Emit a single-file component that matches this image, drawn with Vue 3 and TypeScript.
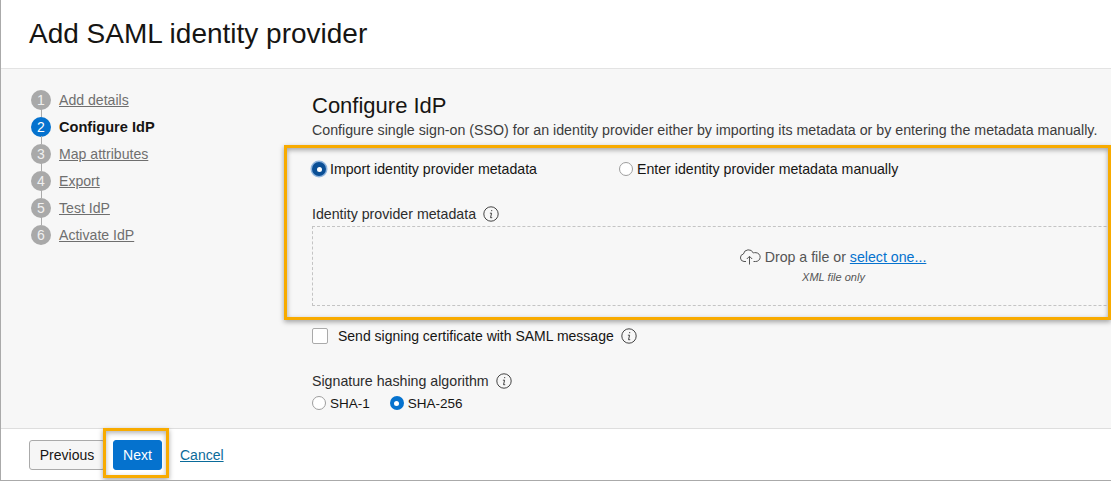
<script setup lang="ts">
const steps = [
  { n: 1, label: 'Add details' },
  { n: 2, label: 'Configure IdP', active: true },
  { n: 3, label: 'Map attributes' },
  { n: 4, label: 'Export' },
  { n: 5, label: 'Test IdP' },
  { n: 6, label: 'Activate IdP' },
]
</script>

<template>
  <div class="page">
    <header class="head"><h1>Add SAML identity provider</h1></header>
    <div class="body">
      <nav class="steps">
        <div v-for="s in steps" :key="s.n" class="step" :class="{ active: s.active }">
          <span class="num">{{ s.n }}</span>
          <span class="lbl">{{ s.label }}</span>
        </div>
      </nav>
      <main class="main">
        <h2>Configure IdP</h2>
        <p class="desc">Configure single sign-on (SSO) for an identity provider either by importing its metadata or by entering the metadata manually.</p>
        <section class="idp">
          <div class="radios">
            <label class="opt first"><span class="radio focus"></span>Import identity provider metadata</label>
            <label class="opt"><span class="radio off"></span>Enter identity provider metadata manually</label>
          </div>
          <div class="field-label">Identity provider metadata
            <svg class="info" viewBox="0 0 16 16"><circle cx="8" cy="8" r="7.2" /><path d="M8.7 4v1.200M6.900 7.200h1.700L7.500 11.700h1.700" /></svg>
          </div>
          <div class="drop">
            <div class="drop-line">
              <svg class="cloud" viewBox="0 0 22 18"><path d="M7 13.5H5a3.8 3.8 0 0 1-.6-7.5A5.2 5.2 0 0 1 14.3 5a4.3 4.3 0 0 1 2.7-.3 4.4 4.4 0 0 1-.5 8.800h-2" /><path d="M10.500 16.500V8.500M7.800 11l2.700-2.700 2.700 2.700" /></svg>
              <span>Drop a file or <a>select one...</a></span>
            </div>
            <div class="hint">XML file only</div>
          </div>
        </section>
        <div class="check-row"><span class="check"></span>Send signing certificate with SAML message
          <svg class="info" viewBox="0 0 16 16"><circle cx="8" cy="8" r="7.2" /><path d="M8.7 4v1.200M6.900 7.200h1.700L7.500 11.700h1.700" /></svg>
        </div>
        <div class="field-label sig">Signature hashing algorithm
          <svg class="info" viewBox="0 0 16 16"><circle cx="8" cy="8" r="7.2" /><path d="M8.7 4v1.200M6.900 7.200h1.700L7.500 11.700h1.700" /></svg>
        </div>
        <div class="hash">
          <label class="opt small"><span class="radio off"></span>SHA-1</label>
          <label class="opt small"><span class="radio on"></span>SHA-256</label>
        </div>
      </main>
      <div class="mark mark-idp"></div>
    </div>
    <footer class="foot">
      <button class="btn prev">Previous</button>
      <span class="next-wrap"><button class="btn primary">Next</button></span>
      <a class="cancel">Cancel</a>
    </footer>
  </div>
</template>

<style>
html, body { margin: 0; padding: 0; background: #fff; }
</style>

<style scoped>
.page {
  width: 1111px;
  height: 481px;
  box-sizing: border-box;
  border-left: 1px solid #aaa;
  border-bottom: 1px solid #aaa;
  display: flex;
  flex-direction: column;
  overflow: hidden;
  font-family: "Liberation Sans", Arial, sans-serif;
  font-size: 14px;
  color: #161513;
}
.head {
  height: 69px;
  flex: none;
  box-sizing: border-box;
  border-bottom: 1px solid #e3e3e3;
  padding: 17px 0 0 28px;
  background: #fff;
}
h1 { margin: 0; font-size: 28px; line-height: 34px; font-weight: 400; }
.body {
  position: relative;
  flex: 1;
  min-height: 0;
  display: flex;
  background: #f7f7f7;
  overflow: hidden;
}
.steps { width: 311px; flex: none; box-sizing: border-box; padding: 17px 0 0 30px; }
.step {
  position: relative;
  display: flex;
  align-items: center;
  height: 27px;
  color: #6f6f6f;
}
.step:not(:last-child)::after {
  content: "";
  position: absolute;
  left: 10px;
  top: 23px;
  width: 1px;
  height: 8px;
  background: #aaa;
}
.num {
  width: 20px;
  height: 20px;
  border-radius: 50%;
  background: #a9a9a9;
  color: #f0f0f0;
  font-size: 14px;
  line-height: 20px;
  text-align: center;
  margin-right: 8px;
}
.lbl { text-decoration: underline; font-size: 14.100px; }
.active .num { background: #0572ce; color: #fff; }
.active .lbl { text-decoration: none; font-weight: 700; font-size: 14.600px; color: #161513; }
.main { flex: 1; min-width: 0; white-space: nowrap; }
h2 { margin: 24px 0 0; font-size: 22px; line-height: 26px; font-weight: 400; }
.desc { margin: 1px 0 0; font-size: 14.230px; line-height: 20px; color: #3c3c3c; }
.idp { margin-top: 19px; }
.radios { display: flex; height: 20px; align-items: center; }
.opt { display: inline-flex; align-items: center; font-size: 14.170px; }
.opt.first { width: 307px; }
.radio {
  width: 14px;
  height: 14px;
  box-sizing: border-box;
  border-radius: 50%;
  margin-right: 4px;
  flex: none;
}
.radio.off { background: #fff; border: 1px solid #9e9e9e; }
.radio.focus, .radio.on { background: #0572ce; position: relative; }
.radio.focus { box-shadow: 0 0 0 1.500px #8fb4dd; background: #0a4f96; }
.radio.focus::after, .radio.on::after {
  content: "";
  position: absolute;
  left: 4.500px;
  top: 4.500px;
  width: 5px;
  height: 5px;
  border-radius: 50%;
  background: #fff;
}
.field-label { display: flex; align-items: center; margin-top: 25px; height: 20px; font-size: 14.200px; color: #2c2c2c; }
.info { width: 16px; height: 16px; margin-left: 7px; fill: none; stroke: #444; stroke-width: 1; }
.drop {
  margin-top: 2px;
  width: 1040px;
  height: 80px;
  box-sizing: border-box;
  border: 1px dashed #c4c4c4;
  border-right: none;
  text-align: center;
  padding-top: 20px;
}
.drop-line { display: flex; justify-content: center; align-items: center; height: 20px; font-size: 14.200px; color: #555; }
.drop-line a { color: #0572ce; text-decoration: underline; }
.cloud { width: 22px; height: 18px; margin-right: 4px; fill: none; stroke: #555; stroke-width: 1; }
.hint { font-size: 11px; font-style: italic; color: #555; line-height: 20px; padding-left: 2px; }
.check-row { display: flex; align-items: center; height: 20px; margin-top: 20px; font-size: 14px; }
.check {
  width: 16px;
  height: 16px;
  box-sizing: border-box;
  background: #fff;
  border: 1px solid #aaa;
  border-radius: 2px;
  margin-right: 10px;
}
.field-label.sig { margin-top: 25px; }
.hash { display: flex; gap: 20px; margin-top: 2px; height: 20px; align-items: center; }
.opt.small { font-size: 13.500px; }
.mark {
  position: absolute;
  left: 283px;
  top: 76px;
  width: 827px;
  height: 175px;
  box-sizing: border-box;
  border: 3px solid #f8ab00;
  box-shadow: 0 2px 5px rgba(0, 0, 0, .35), inset 0 2px 5px rgba(0, 0, 0, .35);
  pointer-events: none;
}
.foot {
  flex: 1 0 52px;
  max-height: 52px;
  display: flex;
  align-items: center;
  box-sizing: border-box;
  border-top: 1px solid #dedede;
  padding-left: 28px;
  background: #fff;
}
.btn {
  height: 30px;
  box-sizing: border-box;
  padding: 0;
  font: 14px "Liberation Sans", Arial, sans-serif;
  color: #161513;
  background: #f6f6f6;
  border: 1px solid #aaa;
  border-radius: 3px;
}
.prev { width: 76px; }
.next-wrap {
  position: relative;
  display: inline-flex;
  margin: 0 18px 0 8px;
}
.next-wrap::after {
  content: "";
  position: absolute;
  left: -10px;
  right: -7px;
  top: -12px;
  bottom: -8px;
  border: 3px solid #f8ab00;
  box-shadow: 0 2px 5px rgba(0, 0, 0, .35), inset 0 2px 5px rgba(0, 0, 0, .3);
  pointer-events: none;
}
.primary { background: #0572ce; border-color: #0572ce; color: #fff; width: 49px; }
.cancel { color: #0a6b9a; text-decoration: underline; font-size: 14px; }
</style>
